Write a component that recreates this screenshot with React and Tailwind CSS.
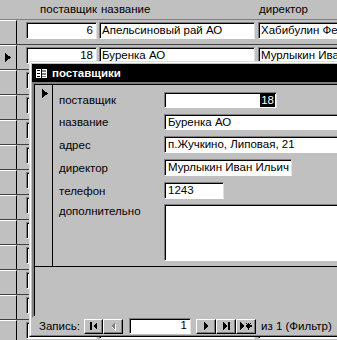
import React from 'react'

// win95-ish bevels
const sunken =
  'bg-white border border-t-[#808080] border-l-[#808080] border-b-white border-r-[#dfdfdf] shadow-[inset_1px_1px_0_#000]'
const raised =
  'bg-[#c0c0c0] border border-t-white border-l-white border-b-black border-r-black shadow-[inset_-1px_-1px_0_#808080]'

const rows = [
  { id: '6', name: 'Апельсиновый рай АО', dir: 'Хабибулин Фед' },
  { id: '18', name: 'Буренка АО', dir: 'Мурлыкин Иван Ильич', current: true },
  ...Array.from({ length: 11 }, () => ({ id: '', name: '', dir: '' })),
]

const Pointer = () => (
  <svg width="6" height="9" viewBox="0 0 6 9" shapeRendering="crispEdges">
    <path d="M0 0 L6 4.5 L0 9 Z" fill="#000" />
  </svg>
)

const FormIcon = () => (
  <svg width="11" height="9" viewBox="0 0 11 9" shapeRendering="crispEdges">
    <rect x="0" y="0" width="11" height="9" fill="#fff" />
    <rect x="1" y="1" width="3" height="1" fill="#000" />
    <rect x="1" y="4" width="3" height="1" fill="#000" />
    <rect x="1" y="7" width="3" height="1" fill="#000" />
    <rect x="5" y="1" width="5" height="2" fill="#808080" />
    <rect x="5" y="4" width="5" height="2" fill="#808080" />
    <rect x="5" y="7" width="5" height="1" fill="#808080" />
    <rect x="5" y="0" width="1" height="9" fill="#000" />
  </svg>
)

const NavIcon = ({ type }) => {
  if (type === 'first')
    return (
      <svg width="9" height="8" viewBox="0 0 9 8" shapeRendering="crispEdges">
        <rect x="1" y="0" width="2" height="8" fill="#000" />
        <path d="M8 0 L4 4 L8 8 Z" fill="#000" />
      </svg>
    )
  if (type === 'prev')
    return (
      <svg width="6" height="9" viewBox="0 0 6 9" shapeRendering="crispEdges">
        <path d="M5 1 L1 4.5 L5 8 Z" fill="#fff" transform="translate(1 1)" />
        <path d="M5 0 L1 4 L5 8 Z" fill="#808080" />
      </svg>
    )
  if (type === 'next')
    return (
      <svg width="5" height="8" viewBox="0 0 5 8" shapeRendering="crispEdges">
        <path d="M0 0 L4 4 L0 8 Z" fill="#000" />
      </svg>
    )
  if (type === 'last')
    return (
      <svg width="9" height="8" viewBox="0 0 9 8" shapeRendering="crispEdges">
        <path d="M1 0 L5 4 L1 8 Z" fill="#000" />
        <rect x="6" y="0" width="2" height="8" fill="#000" />
      </svg>
    )
  return (
    <svg width="12" height="8" viewBox="0 0 12 8" shapeRendering="crispEdges">
      <path d="M0 0 L4 4 L0 8 Z" fill="#000" />
      <path d="M8.5 0.5 V7.5 M5.5 4 H11.5 M6.5 1.5 L10.5 6.5 M10.5 1.5 L6.5 6.5" stroke="#000" strokeWidth="1.2" />
    </svg>
  )
}

const NavButton = ({ type, w = 'w-[20px]' }) => (
  <div className={`${raised} ${w} h-[15px] flex items-center justify-center`}>
    <NavIcon type={type} />
  </div>
)

const Field = ({ label, box, top, children, memo }) => (
  <div className={`flex ${memo ? 'items-start' : 'items-center'} ${top}`}>
    <div className="w-[111px] pl-[6px] pt-[1px]">{label}</div>
    <div className={`${sunken} ${box} shrink-0 px-[3px] flex ${memo ? 'items-start' : 'items-center'} overflow-hidden whitespace-nowrap`}>
      {children}
    </div>
  </div>
)

export default function App() {
  return (
    <div className="relative w-[337px] h-[340px] overflow-hidden bg-[#c0c0c0] text-[11.5px] leading-[13px] text-black font-['Liberation_Sans',Arial,sans-serif]">
      {/* continuous form behind */}
      <div className="h-[20px] flex items-center border-b border-[#808080]">
        <div className="w-[99px] text-right pr-[2px]">поставщик</div>
        <div className="w-[158px] pl-[2px]">название</div>
        <div className="pl-[2px]">директор</div>
      </div>
      {rows.map((r, i) => (
        <div key={i} className="h-[25px] flex border-b border-[#404040]">
          <div className="w-[17px] shrink-0 border-r border-[#000] border-t border-t-white flex items-center justify-center">
            {r.current && <Pointer />}
          </div>
          <div className="flex pt-[2px] pl-[9px] gap-[2px]">
            <div className={`${sunken} w-[71px] h-[17px] text-right pr-[3px] pt-[1px]`}>{r.id}</div>
            <div className={`${sunken} w-[156px] h-[17px] pl-[2px] pt-[1px] mr-[1px]`}>{r.name}</div>
            <div className={`${sunken} w-[82px] h-[17px] pl-[2px] pt-[1px] whitespace-nowrap overflow-hidden`}>{r.dir}</div>
          </div>
        </div>
      ))}

      {/* form window */}
      <div className="absolute left-[29px] top-[61px] w-[340px] h-[276px] bg-[#c0c0c0] border border-t-[#dfdfdf] border-l-[#dfdfdf] border-b-black border-r-black">
        <div className="h-full border border-t-white border-l-white border-b-[#808080] border-r-[#808080] p-[1px] flex flex-col">
          <div className="h-[18px] bg-black text-white font-bold flex items-center pl-[4px] gap-[5px] shrink-0">
            <FormIcon />
            <span className="text-[11.5px]">поставщики</span>
          </div>

          <div className="flex-1 flex flex-col border-2 border-t-[#808080] border-l-[#808080] border-b-[#c0c0c0] border-r-[#c0c0c0] shadow-[inset_1px_1px_0_#000]">
            <div className="h-[183px] flex border-b border-black">
              <div className="w-[19px] shrink-0 border-r border-black pt-[5px] pl-[8px]">
                <Pointer />
              </div>
              <div className="flex-1 flex flex-col">
                <Field label="поставщик" box="w-[113px] h-[16px] justify-end" top="mt-[8px]">
                  <span className="bg-black text-white px-[1px] -mr-[2px]">18</span>
                </Field>
                <Field label="название" box="w-[200px] h-[16px]" top="mt-[6px]">Буренка АО</Field>
                <Field label="адрес" box="w-[200px] h-[17px]" top="mt-[6px]">п.Жучкино, Липовая, 21</Field>
                <Field label="директор" box="w-[128px] h-[17px]" top="mt-[6px]">Мурлыкин Иван Ильич</Field>
                <Field label="телефон" box="w-[60px] h-[17px]" top="mt-[6px]">1243</Field>
                <Field label="дополнительно" box="w-[200px] h-[57px]" top="mt-[5px]" memo />
              </div>
            </div>
            <div className="flex-1" />
          </div>

          <div className="h-[16px] shrink-0 flex items-center">
            <span className="w-[52px] pl-[7px]">Запись:</span>
            <NavButton type="first" w="w-[19px]" />
            <NavButton type="prev" />
            <div className={`${sunken} w-[62px] h-[16px] ml-[6px] text-right pr-[3px]`}>1</div>
            <div className="ml-[5px] flex">
              <NavButton type="next" />
              <NavButton type="last" />
              <NavButton type="new" />
            </div>
            <span className="ml-[5px] whitespace-nowrap">из 1 (Фильтр)</span>
          </div>
        </div>
      </div>
    </div>
  )
}
